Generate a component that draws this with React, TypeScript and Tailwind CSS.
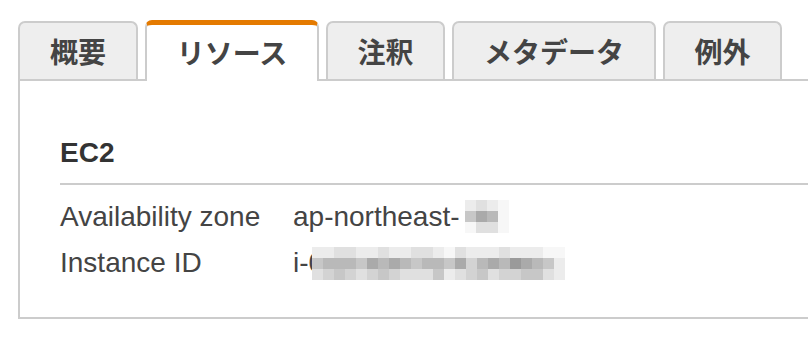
import React from "react";

const tabs = [
  { label: "概要", width: "w-[120px]", active: false },
  { label: "リソース", width: "w-[174px]", active: true },
  { label: "注釈", width: "w-[119px]", active: false },
  { label: "メタデータ", width: "w-[204px]", active: false },
  { label: "例外", width: "w-[119px]", active: false },
];

// mosaic shades, lightest to darkest
const shades = [
  "bg-[#f7f7f7]",
  "bg-[#ececec]",
  "bg-[#e0e0e0]",
  "bg-[#d3d3d3]",
  "bg-[#c7c7c7]",
  "bg-[#b9b9b9]",
  "bg-[#aaaaaa]",
  "bg-[#9a9a9a]",
];

const zoneMosaic = ["1210", "4650", "0220"];
const idMosaic = [
  "11221121122102111211100",
  "45554656545546356576541",
  "23432343222412342334421",
];

function Mosaic({ rows }: { rows: string[] }) {
  return (
    <div className="flex flex-col">
      {rows.map((row, r) => (
        <div key={r} className="flex">
          {row.split("").map((c, i) => (
            <div key={i} className={`w-[11px] h-[11px] ${shades[Number(c)]}`} />
          ))}
        </div>
      ))}
    </div>
  );
}

export default function App() {
  return (
    <div className="w-[808px] h-[346px] overflow-hidden bg-white pt-[20px] pl-[18px] font-['Liberation_Sans',Arial,sans-serif]">
      {/* Tabs */}
      <div className="flex items-end gap-[7px] h-[59px]">
        {tabs.map((t) =>
          t.active ? (
            <div
              key={t.label}
              className={`${t.width} h-[61px] -mb-[2px] relative z-10 flex items-center justify-center bg-white border-2 border-b-0 border-[#cccccc] border-t-[5px] border-t-[#e47a00] rounded-t-[7px] pb-[3px] font-['Noto_Sans_CJK_JP',sans-serif] font-bold text-[28px] leading-none text-[#444444]`}
            >
              {t.label}
            </div>
          ) : (
            <div
              key={t.label}
              className={`${t.width} h-[58px] flex items-center justify-center bg-[#eeeeee] border-2 border-b-0 border-[#cccccc] rounded-t-[7px] font-['Noto_Sans_CJK_JP',sans-serif] font-bold text-[28px] leading-none text-[#444444]`}
            >
              {t.label}
            </div>
          )
        )}
      </div>

      {/* Panel */}
      <div className="w-[840px] h-[240px] border-2 border-[#cccccc] pl-[40px] pt-[56px]">
        <div className="border-b-2 border-[#cccccc] pb-[14px]">
          <h2 className="text-[28px] leading-[32px] font-bold text-[#333333]">EC2</h2>
        </div>
        <div className="pt-[9px] text-[28px] leading-[46px] text-[#444444]">
          <div className="flex">
            <div className="w-[233px]">Availability zone</div>
            <div className="flex items-start">
              <span>ap-northeast-</span>
              <div className="mt-[6px] ml-[5px]">
                <Mosaic rows={zoneMosaic} />
              </div>
            </div>
          </div>
          <div className="flex">
            <div className="w-[233px]">Instance ID</div>
            <div className="flex items-start">
              <span>i-0</span>
              <div className="mt-[7px] -ml-[12px] relative">
                <Mosaic rows={idMosaic} />
              </div>
            </div>
          </div>
        </div>
      </div>
    </div>
  );
}
